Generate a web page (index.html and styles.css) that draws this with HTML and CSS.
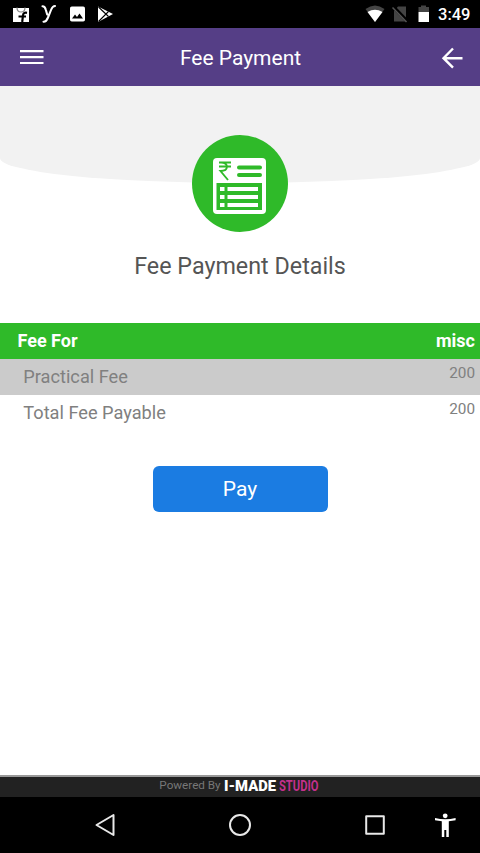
FILE: index.html
```
<!DOCTYPE html>
<html lang="en">
<head>
<meta charset="utf-8">
<title>Fee Payment</title>
<link rel="stylesheet" href="styles.css">
</head>
<body>
<div class="screen">
  <div class="status">
    <svg class="status-icons" width="120" height="28" viewBox="0 0 120 28">
      <path d="M13 8h16v14H13z" fill="#fff"/>
      <path d="M17 7.500q0 4.500 4 4.500t4-4.500" fill="none" stroke="#888" stroke-width="1.200"/>
      <path d="M27 12.800q-3.800-.8-4 2.700l-.8 6.500M18.500 16.500h7.500" fill="none" stroke="#000" stroke-width="2.200"/>
      <path d="M42.500 6.200q2.500 0 3.300 3.500l1.400 4.800M55 6q-2.500 0-4 4l-3 7.500q-1.800 4.500-4.500 4.200" fill="none" stroke="#fff" stroke-width="2.100" stroke-linecap="round"/>
      <rect x="70" y="6.500" width="15" height="15" rx="1.800" fill="#fff"/>
      <path d="M72 18.500l3-4 2 2.500 2.500-3.500 3.500 5z" fill="#000"/>
      <path d="M98 6.500l15 7.500-15 8z" fill="#fff"/>
      <path d="M98.500 7l10 9.500M98.500 21.500l10-10" stroke="#000" stroke-width="1.100"/>
    </svg>
    <div class="status-right">
      <svg width="68" height="28" viewBox="0 0 68 28">
        <path d="M.5 9Q10 2 19.500 9L10 22z" fill="#444"/>
        <path d="M2.500 12q7.500-4.500 15 0L10 22z" fill="#fff"/>
        <path d="M33 6.500h8V21.500H29V11z" fill="#444"/>
        <path d="M28 6.500l14.500 15" stroke="#000" stroke-width="3.500"/>
        <path d="M27.500 7.500l14 14.500" stroke="#555" stroke-width="1.500"/>
        <path d="M53.500 7h2.500V5.500h5V7h3v5H53.500z" fill="#444"/>
        <path d="M53.500 12H64v10H53.500z" fill="#fff"/>
      </svg>
      <span class="clock">3:49</span>
    </div>
  </div>
  <header class="appbar">
    <svg width="24" height="18" viewBox="0 0 24 18"><path d="M0 2.200h23.500M0 8.200h23.500M0 14h23.500" stroke="#fff" stroke-width="2.200"/></svg>
    <h1 class="appbar-title">Fee Payment</h1>
    <svg width="22" height="22" viewBox="0 0 22 22"><path d="M21.500 11.200H3M12 1.500l-9.500 9.700 9.500 9.500" fill="none" stroke="#fff" stroke-width="2.400"/></svg>
  </header>
  <main class="content">
    <div class="curve"></div>
    <svg class="badge" width="96" height="97" viewBox="0 0 96 97">
      <ellipse cx="48" cy="48.500" rx="48" ry="48.500" fill="#2fba29"/>
      <rect x="21" y="23" width="53" height="56" rx="4" fill="#fff"/>
      <path d="M24.500 48h45.500v27H24.500z" fill="#2fba29"/>
      <path d="M28 52h4.500v4H28zM35.500 52H66v4H35.500zM28 60h4.500v4H28zM35.500 60H66v4H35.500zM28 68h4.500v4H28zM35.500 68H66v4H35.500z" fill="#fff"/>
      <path d="M47 32.500h21M47 40h21" stroke="#2fba29" stroke-width="4" stroke-linecap="round"/>
      <path d="M27 27.500h12M27 31.500h12M29 27.500c8 0 8 8.500-.5 8.500l7.500 9" fill="none" stroke="#2fba29" stroke-width="1.900"/>
    </svg>
    <h2 class="title">Fee Payment Details</h2>
    <div class="fees">
      <div class="row head"><span>Fee For</span><span>misc</span></div>
      <div class="row item shaded"><span>Practical Fee</span><span class="amount">200</span></div>
      <div class="row item"><span>Total Fee Payable</span><span class="amount">200</span></div>
    </div>
    <button class="pay">Pay</button>
  </main>
  <footer class="footer">
    <span class="powered">Powered By</span>
    <svg width="98" height="20" viewBox="0 0 98 20">
      <text class="made" x="1" y="14" textLength="52" lengthAdjust="spacingAndGlyphs">I-MADE</text>
      <text class="studio" transform="translate(56 14.300) scale(.77 1)">STUDIO</text>
    </svg>
  </footer>
  <nav class="nav">
    <svg width="480" height="56" viewBox="0 0 480 56" fill="none" stroke="#e8e8e8" stroke-width="2" stroke-linejoin="round">
      <path d="M113.500 18v20L96.500 28z"/>
      <circle cx="240" cy="28" r="10"/>
      <rect x="366.200" y="19.200" width="17.600" height="17.600"/>
      <g fill="#fff" stroke="none"><circle cx="445.200" cy="18.800" r="2.400"/><path d="M435 21q10.300 2.500 20.600 0v2.200l-6.800 1V40h-2.500v-7h-2v7h-2.500V24.200l-6.800-1z"/></g>
    </svg>
  </nav>
</div>
</body>
</html>
```
FILE: styles.css
```
* { box-sizing: border-box; }
body { margin: 0; font-family: Roboto, "Liberation Sans", sans-serif; background: #fff; }
svg { display: block; flex: none; }
.screen { width: 480px; height: 853px; display: flex; flex-direction: column; overflow: hidden; }
.status { height: 28px; background: #000; display: flex; justify-content: space-between; }
.status-right { display: flex; padding-right: 9px; gap: 5px; }
.clock { color: #fff; font-size: 16.500px; font-weight: 500; line-height: 29px; width: 33px; white-space: nowrap; }
.appbar { height: 58px; background: #553e86; color: #fff; display: flex; align-items: center; justify-content: space-between; padding: 2px 17px 0 20px; }
.appbar-title { margin: 0; padding: 0 4px 1px 0; font-size: 21px; font-weight: 400; line-height: 30px; }
.content { flex: 1; display: flex; flex-direction: column; align-items: center; }
.curve { width: 480px; height: 97px; background: #f2f2f2; border-radius: 0 0 50% 50% / 0 0 25px 25px; }
.badge { margin-top: -48px; }
.title { margin: 19px 0 0; font-size: 23.300px; font-weight: 400; line-height: 30px; color: #555; }
.fees { width: 100%; margin-top: 42px; }
.row { height: 36px; display: flex; justify-content: space-between; line-height: 35px; font-size: 18px; padding-right: 5px; }
.head { background: #2fba29; color: #fff; font-weight: 700; padding-left: 17.500px; }
.item { color: #808080; padding-left: 23.300px; font-size: 18.200px; }
.shaded { background: #cbcbcb; }
.amount { font-size: 15.300px; line-height: 28px; }
.pay { width: 175px; height: 46px; margin-top: 35px; padding: 0; border: 0; border-radius: 6px; background: #1b7ce2; color: #fff; font: 400 21px/46px Roboto, sans-serif; }
.footer { height: 22px; background: #222; border-top: 2px solid #999; display: flex; justify-content: center; gap: 2px; }
.powered { color: #777; font-size: 11.700px; line-height: 17px; }
.made { font: 900 14px Roboto, sans-serif; fill: #fff; }
.studio { font: 700 14.500px Roboto, sans-serif; fill: #c5308c; }
.nav { height: 56px; background: #000; }
```
